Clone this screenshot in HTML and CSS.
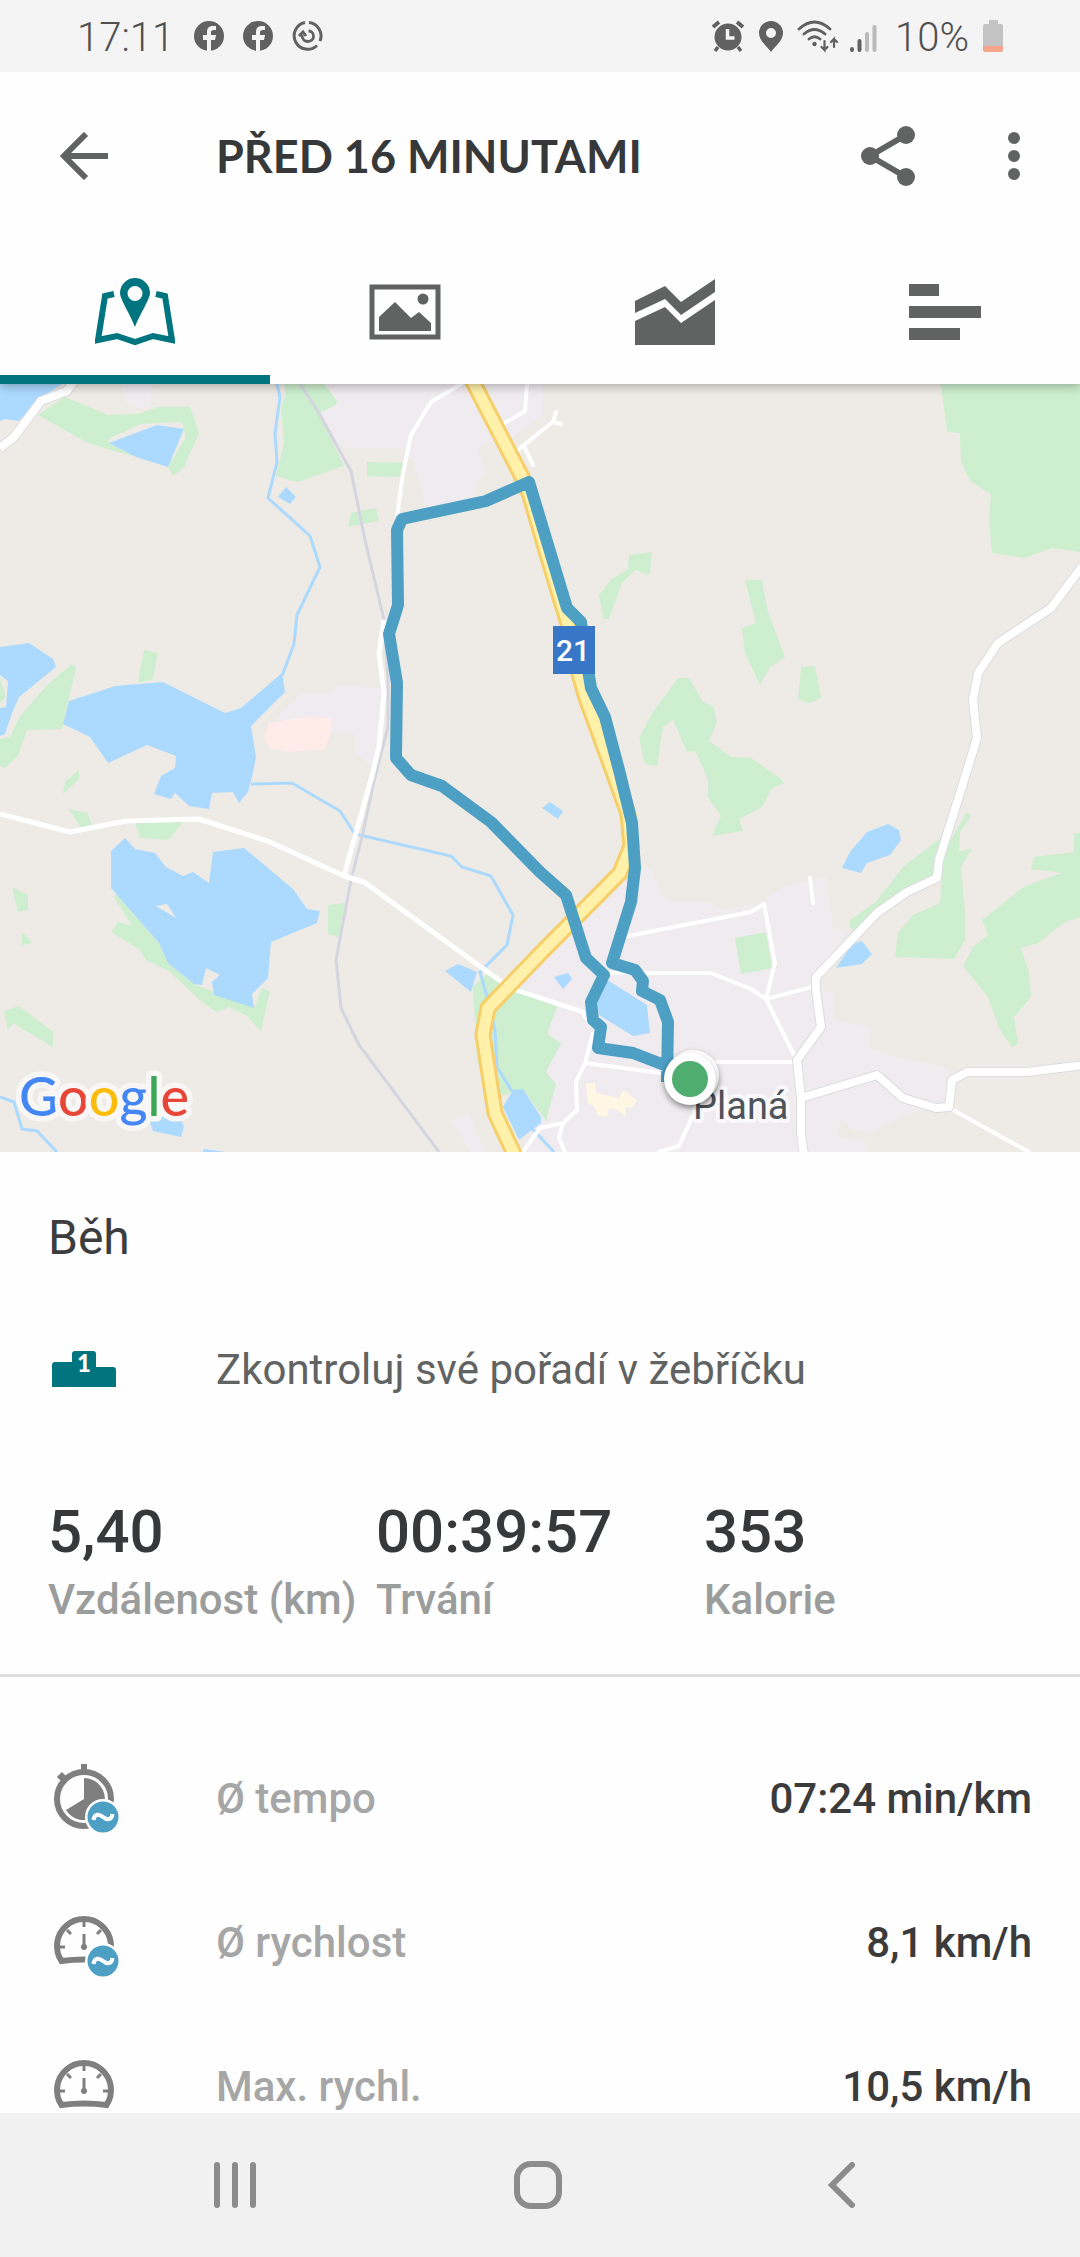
FILE: index.html
```html
<!DOCTYPE html>
<html lang="cs">
<head>
    <meta charset="UTF-8">
    <meta name="viewport" content="width=device-width, initial-scale=1.0">
    <title>Běh</title>
    <link rel="stylesheet" href="styles.css">
</head>
<body>

    <!-- Status bar -->
    <div class="status-bar">
        <div class="status-group">
            <span class="status-text">17:11</span>
            <svg class="status-fb" width="32" height="32" viewBox="0 0 32 32"><circle cx="16" cy="16" r="15" fill="#616161"/><path d="M14 32V20h-4v-5h4v-3c0-4 2-6 6-6h3v4h-2c-2 0-3 1-3 2v3h5l-1 5h-4v12z" fill="#f4f4f4"/></svg>
            <svg class="status-fb" width="32" height="32" viewBox="0 0 32 32"><circle cx="16" cy="16" r="15" fill="#616161"/><path d="M14 32V20h-4v-5h4v-3c0-4 2-6 6-6h3v4h-2c-2 0-3 1-3 2v3h5l-1 5h-4v12z" fill="#f4f4f4"/></svg>
            <svg width="32" height="32" viewBox="0 0 32 32" fill="none" stroke="#616161" stroke-width="3"><path d="M14 2.500A13.500 13.500 0 1 0 26 25.500M18 2.500A13.500 13.500 0 0 1 29 21"/><path d="M11 15c0 9 12 8 11.500 1 0-4-3-5-5-5M8 16l4-4 3 4" stroke-width="2.800"/></svg>
        </div>
        <div class="status-group">
            <svg width="34" height="34" viewBox="0 0 34 34" fill="none" stroke="#616161"><circle cx="17" cy="18" r="13.500" fill="#616161" stroke="none"/><path d="M2 8l6-5M32 8l-6-5" stroke-width="4"/><path d="M7 28l-3 4M27 28l3 4" stroke-width="3.500"/><path d="M16.500 10v9h7" stroke="#f4f4f4" stroke-width="3.500"/></svg>
            <svg width="24" height="34" viewBox="0 0 24 34"><path d="M12 2a12 12 0 0 0-12 12c0 8 8 13 12 19 4-6 12-11 12-19a12 12 0 0 0-12-12zm0 7a5 5 0 1 1 0 10 5 5 0 0 1 0-10z" fill="#616161"/></svg>
            <svg width="42" height="36" viewBox="0 0 42 36" fill="none" stroke="#616161" stroke-width="2.800" stroke-linecap="round"><path d="M2 11Q17.500-3 33 11M7 16Q17.500 7 28 16M12 21Q17.500 16.500 23 21"/><circle cx="17.500" cy="26" r="2.200" fill="#616161" stroke="none"/><path d="M27.500 23v9l-3-3m3 3l3-3M37 29v-8l-3 3m3-3l3 3" stroke-width="2.200"/></svg>
            <svg class="status-signal" width="28" height="34" viewBox="0 0 28 34" stroke-width="4" stroke-linecap="round"><path d="M3 30v1M10.500 22v9" stroke="#616161"/><path d="M18 15v16M25.500 8v23" stroke="#bababa"/></svg>
            <span class="status-text">10%</span>
            <svg width="20" height="34" viewBox="0 0 20 34"><path d="M6 1h9v4h3a2 2 0 0 1 2 2v20H0V7a2 2 0 0 1 2-2h4z" fill="#c3c3c3"/><path d="M0 27h20v4a2 2 0 0 1-2 2H2a2 2 0 0 1-2-2z" fill="#f6a58c"/></svg>
        </div>
    </div>

    <header class="header">
        <div class="app-bar">
            <button class="icon-btn" aria-label="Zpět">
                <svg width="48" height="48" viewBox="0 0 48 48" fill="none" stroke="#616362" stroke-width="6"><path d="M48 24H5M26 2L4 24l22 22"/></svg>
            </button>
            <h1 class="title">PŘED 16 MINUTAMI</h1>
            <button class="icon-btn share" aria-label="Sdílet">
                <svg width="54" height="60" viewBox="0 0 54 60"><path d="M45 9L9 30l36 21" fill="none" stroke="#616362" stroke-width="6"/><g fill="#616362"><circle cx="45" cy="9" r="9"/><circle cx="9" cy="30" r="9"/><circle cx="45" cy="51" r="9"/></g></svg>
            </button>
            <button class="icon-btn" aria-label="Více">
                <svg width="12" height="48" viewBox="0 0 12 48" fill="#616362"><circle cx="6" cy="6" r="6"/><circle cx="6" cy="24" r="6"/><circle cx="6" cy="42" r="6"/></svg>
            </button>
        </div>

        <nav class="tabs">
            <button class="tab active" aria-label="Mapa">
                <svg width="80" height="70" viewBox="0 0 80 70"><path d="M19 17l-9 2L3 63l19-4 18 6 18-6 19 4-7-44-9-2" fill="none" stroke="#00757f" stroke-width="6"/><path d="M40 1a15 15 0 0 0-15 15c0 6 10 21 15 34 5-13 15-28 15-34A15 15 0 0 0 40 1zm0 8a7.500 7.500 0 1 1 0 15 7.500 7.500 0 0 1 0-15z" fill="#00757f"/></svg>
            </button>
            <button class="tab" aria-label="Fotky">
                <svg width="72" height="56" viewBox="0 0 72 56"><rect x="3" y="3" width="66" height="50" fill="none" stroke="#616362" stroke-width="5"/><path d="M10 47V33l16-15 16 16 8-6 12 11v8z" fill="#616362"/><circle cx="54" cy="15" r="5.500" fill="#616362"/></svg>
            </button>
            <button class="tab" aria-label="Graf">
                <svg width="80" height="66" viewBox="0 0 80 66" fill="#616362"><path d="M0 22L30 7l16 16L80 0v13L46 36 30 20 0 34z"/><path d="M0 42l30-14 16 16 34-23v45H0z"/></svg>
            </button>
            <button class="tab" aria-label="Mezičasy">
                <svg width="72" height="56" viewBox="0 0 72 56" fill="#616362"><path d="M0 0h30v12H0zM0 22h72v12H0zM0 44h51v12H0z"/></svg>
            </button>
        </nav>
    </header>

    <main class="content">
        <!-- Map -->
        <svg class="map" viewBox="0 0 1080 768" role="img" aria-label="Mapa trasy">
            <rect width="1080" height="768" fill="#eeebe6"/>

            <!-- built-up areas -->
            <g fill="#efebef">
                <path d="M122 0H153L149 23 138 24 126 19z"/>
                <path d="M324 0H543V30L513 53 477 63 486 89 477 99 472 123 425 129 422 106 412 76 406 64H339L319 29 336 21z"/>
                <path d="M301 309H331L336 302 384 304 379 363 371 383 355 368 354 348 332 349 330 334 275 336z"/>
                <path d="M451 736L468 729 486 768H470z"/>
                <path d="M628 496L643 484 652 486 661 509 671 518 712 519 723 526 760 519 781 504 826 492 833 543 846 549 815 593 822 606 833 609 834 636 871 643 869 663 895 673 946 683 952 693 948 719 908 731 871 748 852 746 840 734 838 753 867 758V768H520L540 730 550 640 514 606 540 580z"/>
            </g>
            <path d="M269 339L306 333 331 334 332 346 325 365 288 368 270 364 264 354z" fill="#ffebe8"/>
            <path d="M586 699H595L596 709 619 714 623 706 637 716 632 724 626 723V733L617 726 609 724 607 733 597 731 595 723 588 719z" fill="#fff6e3"/>

            <!-- woods -->
            <g fill="#cdeecf">
                <path d="M38 31L65 13 108 31 138 30 158 23H190L199 49 184 83 173 92 168 83 186 53 182 38 141 40 108 55 109 59 138 73 114 67 86 58z"/>
                <path d="M284 0H324L337 17 336 21 319 29 344 82 297 98 276 92 284 59 281 23 286 9z"/>
                <path d="M367 78L404 79 402 93 367 92z"/>
                <path d="M351 129L376 124 379 137 348 143z"/>
                <path d="M0 294L6 313 0 319z"/>
                <path d="M72 280L76 283 62 345 27 346 18 372 5 384 0 382V355L10 353 19 334 46 302z"/>
                <path d="M144 266L158 269 153 295 138 299z"/>
                <path d="M79 386V395L63 410 65 398z"/>
                <path d="M69 425L87 429 93 443 81 444z"/>
                <path d="M135 439L183 438 168 456 140 454z"/>
                <path d="M116 510L159 559 168 579 194 600 254 624 262 604 270 607 261 647 247 632 229 623 217 628 203 619 169 587 146 576 140 566 111 548 118 538 132 542 114 513z"/>
                <path d="M12 503L28 511V526L18 528z"/>
                <path d="M22 548L33 559 22 561z"/>
                <path d="M4 627L19 622 53 648V663L13 639 8 646z"/>
                <path d="M328 521L345 519 339 553 328 550z"/>
                <path d="M487 590L540 612 557 623 547 650 561 659 546 688 556 700 546 737 523 705 503 711 495 729 477 676 473 603z"/>
                <path d="M941 0L947 48 960 49 961 78 970 97 991 110 989 136 992 169 1024 174 1052 164 1080 168V0z"/>
                <path d="M629 171L652 168 650 191 635 186 622 199 609 235H603L599 211 612 195 628 185z"/>
                <path d="M745 196H762L768 228 785 273 770 283 760 301 745 269 742 244 756 239z"/>
                <path d="M801 283L815 282 821 314 809 319 798 315z"/>
                <path d="M678 294H689L703 318 713 322 717 338 709 357 731 373 751 374 781 395 784 399 772 404 762 423 739 435 743 447 712 452 721 432 708 413V396L704 386 695 367 687 368 673 336 663 343 657 382 645 380 639 354 653 328z"/>
                <path d="M735 554L766 548 772 584 741 590z"/>
                <path d="M967 428L971 432 960 448 959 468 972 464 961 483 965 529V556L954 575 895 573 898 549 913 531 940 519 942 490 939 476z"/>
                <path d="M941 454L903 483 876 518 850 536V544L855 547 878 528 907 508 937 494z"/>
                <path d="M1080 449H1074V468L1034 473 1031 485 1062 489 1025 502 982 536 988 551 973 563 963 582 988 613 1000 646 1012 663 1018 660 1014 633 1031 613 1029 589 1021 564 1038 559 1065 538 1080 533z"/>
            </g>

            <!-- water -->
            <g fill="#acdaff">
                <path d="M0 0H62L38 16 19 37 5 35 0 37z"/>
                <path d="M109 59L157 41 184 45 168 83 136 73z"/>
                <path d="M286 103L296 113 290 120 278 113z"/>
                <path d="M0 263L29 259 53 275 56 283 19 313 12 329 5 350 0 352V324L6 323 8 297 0 291z"/>
                <path d="M69 317L115 302 163 298 225 329 241 324 282 289 285 308 251 342 256 373 253 389 248 408 239 419 233 408 212 409 209 425 189 422 175 409 171 415 154 410 161 392 175 384 176 372 147 361 108 379 90 353 63 340z"/>
                <path fill-rule="evenodd" d="M125 454L135 465 155 469 166 483 183 492 193 488 209 499 213 468 244 464 293 505 307 525 320 527 317 539 271 558 268 594 252 610 254 624 214 611 212 598 220 591 206 584 202 601 194 600 168 579 159 559 111 504V467zM156 522L167 520 176 534z"/>
                <path d="M458 580L477 588 471 608 445 587z"/>
                <path d="M513 706L523 705 541 733V739L519 756 503 723z"/>
                <path d="M148 733L179 731 184 743 181 753 153 747z"/>
                <path d="M204 765L226 768H203z"/>
                <path d="M888 440L899 446 901 456 890 471 867 479 861 489 842 484 850 468 867 448z"/>
                <path d="M852 560L862 557 872 570 862 580 836 584z"/>
                <path d="M550 418L563 427 558 435 542 424z"/>
                <path d="M554 593L568 589 572 595 563 605z"/>
                <path d="M604 594L647 621 650 649 633 652 599 631 597 619z"/>
            </g>
            <g fill="none" stroke="#acdaff" stroke-width="3">
                <path d="M277 0L280 13 275 49 277 78 268 114 310 152 320 183 297 231 294 260 282 292"/>
                <path d="M251 400L292 399 340 427 355 450 451 472 462 483 491 492 513 531 507 561 480 588 488 616 495 646 497 683 512 707M530 742L554 768"/>
                <path d="M0 713L14 718 22 745 37 747 57 768"/>
            </g>

            <!-- railway -->
            <path d="M300 0L319 29 343 73 351 87 365 156 384 236 388 296V343L375 393 362 453 351 496 336 576 341 624 359 661 439 768" fill="none" stroke="#d5d5df" stroke-width="3"/>

            <!-- local roads -->
            <g fill="none" stroke="#fff" stroke-width="4" stroke-linejoin="round" stroke-linecap="round">
                <path d="M461 0L431 18 411 51 403 89 397 133M527 0L525 27 503 40M518 66L540 48 553 38 556 28M553 38L561 40M525 64L533 81"/>
                <path d="M628 552L751 528 764 520 775 579 766 615 795 673M766 615L812 603M611 589H711L751 605 766 615M810 494L813 519M716 678H795"/>
                <path d="M593 649L585 679 661 689M585 679L576 698 577 726 563 739 559 754 565 768M563 739L540 744 523 768M692 733L679 762 659 768M953 726L1029 768"/>
            </g>
            <g fill="none" stroke="#fff" stroke-width="5" stroke-linejoin="round">
                <path d="M384 236L379 269 384 309 379 363 372 392 344 492"/>
                <path d="M0 430L70 448 126 437 199 435 270 458 344 492 364 498 510 604 583 628 592 642"/>
            </g>

            <!-- main roads, casing first -->
            <g fill="none" stroke-linejoin="round">
                <path d="M0 64L14 53 41 17 67 7 75-4M1084 180L1051 224 998 259 978 289 973 316 977 354 966 390 939 476 937 494 907 508 878 528 816 593V606L821 643 797 676 801 714V749L804 772M801 714L877 691 903 714 936 724 949 723 952 696 967 688H1027L1084 681" stroke="#dcdcdf" stroke-width="10"/>
                <path d="M0 64L14 53 41 17 67 7 75-4M1084 180L1051 224 998 259 978 289 973 316 977 354 966 390 939 476 937 494 907 508 878 528 816 593V606L821 643 797 676 801 714V749L804 772M801 714L877 691 903 714 936 724 949 723 952 696 967 688H1027L1084 681" stroke="#fff" stroke-width="8"/>
                <path d="M472-4L522 93 530 112 548 174 568 240 579 290 586 314 613 388 628 430 631 462 620 489 540 570 488 624 483 651 495 729 515 772" stroke="#f6cf6a" stroke-width="17"/>
                <path d="M472-4L522 93 530 112 548 174 568 240 579 290 586 314 613 388 628 430 631 462 620 489 540 570 488 624 483 651 495 729 515 772" stroke="#fff1aa" stroke-width="11"/>
            </g>

            <!-- recorded track -->
            <path d="M667 698L668 638 660 616 642 607 643 597 635 586 612 579 631 518 635 484 632 439 619 386 605 333 591 304 588 286 581 238 567 224 529 98 486 117 402 135 397 146 398 221 389 250 397 299 396 374 411 391 442 402 491 438 540 488 566 511 586 574 604 591 591 618 593 636 601 643 598 664 633 669 672 684" fill="none" stroke="#4d9fc4" stroke-width="12" stroke-linejoin="round"/>

            <rect x="553" y="242" width="42" height="48" fill="#3876c8"/>
            <text class="road-number" x="573" y="277" text-anchor="middle">21</text>

            <text class="place" x="693" y="735">Planá</text>
            <circle class="pin" cx="693" cy="692" r="26"/>
            <circle class="pin" cx="690" cy="695" r="26"/>
            <circle cx="690" cy="695" r="18" fill="#50ad70"/>

            <text class="google" x="19" y="732"><tspan fill="#4486f4">G</tspan><tspan fill="#e64537">o</tspan><tspan fill="#fbbd0a">o</tspan><tspan fill="#4486f4">g</tspan><tspan fill="#3aa757">l</tspan><tspan fill="#e64537">e</tspan></text>
        </svg>

        <h2 class="sport">Běh</h2>

        <a class="leaderboard" href="#">
            <svg width="72" height="48" viewBox="0 -6 72 48"><path d="M4 36V14a3 3 0 0 1 3-3h17V3a3 3 0 0 1 3-3h18a3 3 0 0 1 3 3v13h17a3 3 0 0 1 3 3v17z" fill="#00757f"/><text class="rank" x="36" y="21" text-anchor="middle">1</text></svg>
            <span>Zkontroluj své pořadí v žebříčku</span>
        </a>

        <!-- Summary -->
        <dl class="summary">
            <div><dd>5,40</dd><dt>Vzdálenost (km)</dt></div>
            <div><dd>00:39:57</dd><dt>Trvání</dt></div>
            <div><dd>353</dd><dt>Kalorie</dt></div>
        </dl>

        <!-- Details -->
        <dl class="details">
            <div class="detail">
                <svg width="72" height="72" viewBox="0 0 72 72"><g fill="none" stroke="#7f7f7f" stroke-width="6"><circle cx="36" cy="37" r="27"/><path d="M36 2v8M11 17l5-5"/></g><path d="M36 37V16a21 21 0 1 1-18 32z" fill="#7f7f7f"/><circle cx="55" cy="55" r="18" fill="#fff"/><circle cx="55" cy="55" r="15.500" fill="#4d9fc4"/><path d="M45.500 58c1-7 6-6 9.500-3s8.500 4 9.500-3" fill="none" stroke="#fff" stroke-width="4"/></svg>
                <dt>Ø tempo</dt>
                <dd>07:24 min/km</dd>
            </div>
            <div class="detail">
                <svg width="72" height="72" viewBox="0 0 72 72"><path d="M13.500 55a27 27 0 1 1 45 0q-22.500-3-45 0z" fill="none" stroke="#7f7f7f" stroke-width="6"/><path d="M36 16v5M12 41h5M60 41h-5M19 24l4 4M53 24l-4 4M36 28v13" stroke="#7f7f7f" stroke-width="3"/><circle cx="36" cy="41" r="3" fill="#7f7f7f"/><circle cx="55" cy="55" r="18" fill="#fff"/><circle cx="55" cy="55" r="15.500" fill="#4d9fc4"/><path d="M45.500 58c1-7 6-6 9.500-3s8.500 4 9.500-3" fill="none" stroke="#fff" stroke-width="4"/></svg>
                <dt>Ø rychlost</dt>
                <dd>8,1 km/h</dd>
            </div>
            <div class="detail">
                <svg width="72" height="72" viewBox="0 0 72 72"><path d="M13.500 55a27 27 0 1 1 45 0q-22.500-3-45 0z" fill="none" stroke="#7f7f7f" stroke-width="6"/><path d="M36 16v5M12 41h5M60 41h-5M19 24l4 4M53 24l-4 4M36 28v13" stroke="#7f7f7f" stroke-width="3"/><circle cx="36" cy="41" r="3" fill="#7f7f7f"/></svg>
                <dt>Max. rychl.</dt>
                <dd>10,5 km/h</dd>
            </div>
        </dl>
    </main>

    <!-- System navigation -->
    <nav class="system-nav">
        <button aria-label="Poslední aplikace"><svg width="42" height="46" viewBox="0 0 42 46"><path d="M3 3v40M21 3v40M39 3v40" stroke="#8c8c8c" stroke-width="6" stroke-linecap="round"/></svg></button>
        <button aria-label="Domů"><svg width="48" height="48" viewBox="0 0 48 48"><rect x="3" y="3" width="42" height="42" rx="14" fill="none" stroke="#8c8c8c" stroke-width="6"/></svg></button>
        <button aria-label="Zpět"><svg width="28" height="46" viewBox="0 0 28 46"><path d="M25 3L5 23l20 20" fill="none" stroke="#8c8c8c" stroke-width="6" stroke-linecap="round"/></svg></button>
    </nav>

</body>
</html>
```

FILE: styles.css
```css
* {
    margin: 0;
    padding: 0;
    box-sizing: border-box;
}

body {
    font-family: Roboto, "Liberation Sans", sans-serif;
    background-color: #fefefe;
    color: #373839;
    display: flex;
    flex-direction: column;
    height: 100vh;
    overflow: hidden;
}

button {
    background: none;
    border: none;
    cursor: pointer;
}

svg {
    display: block;
    flex-shrink: 0;
}

/* Status bar */
.status-bar {
    position: relative;
    z-index: 2;
    display: flex;
    justify-content: space-between;
    align-items: center;
    flex-shrink: 0;
    height: 72px;
    padding: 0 77px;
    background-color: #f4f4f4;
}

.status-group {
    display: flex;
    align-items: center;
    gap: 14px;
}

.status-text {
    padding-top: 4px;
    font-size: 40px;
    font-weight: 300;
    line-height: 48px;
    color: #505050;
}

.status-fb {
    margin-right: 3px;
}

.status-group .status-text:first-child {
    margin-right: 5px;
}

.status-signal {
    margin-left: -4px;
    margin-right: 4px;
}

/* Header */
.header {
    position: relative;
    z-index: 1;
    flex-shrink: 0;
    background-color: #fefefe;
    box-shadow: 0 2px 10px rgba(0, 0, 0, 0.3);
}

.app-bar {
    display: flex;
    align-items: center;
    height: 168px;
    padding: 0 60px;
}

.title {
    flex: 1;
    padding-left: 108px;
    font-family: Lato, sans-serif;
    font-size: 45px;
    font-weight: 700;
}

.share {
    margin-right: 93px;
}

.tabs {
    display: flex;
    height: 144px;
}

.tab {
    flex: 1;
    display: flex;
    justify-content: center;
    align-items: center;
    border-top: 9px solid transparent;
    border-bottom: 9px solid transparent;
}

.tab.active {
    border-bottom-color: #00757f;
}

/* Content */
.content {
    flex: 1;
    min-height: 0;
    overflow: hidden;
}

.map {
    width: 100%;
    height: auto;
}

.road-number {
    font-size: 30px;
    font-weight: 500;
    fill: #fff;
}

.place {
    font-size: 38px;
    fill: #4e545a;
    stroke: rgba(255, 255, 255, 0.7);
    stroke-width: 8px;
    stroke-linejoin: round;
    paint-order: stroke;
}

.pin {
    fill: #fff;
    filter: drop-shadow(0 3px 3px rgba(0, 0, 0, 0.35));
}

.google {
    font-family: Lato, sans-serif;
    font-size: 54px;
    font-weight: 500;
    stroke: #f8f7f5;
    stroke-width: 11px;
    stroke-linejoin: round;
    paint-order: stroke;
}

.sport {
    padding: 58px 48px 30px;
    font-size: 48px;
    font-weight: 400;
    line-height: 56px;
    color: #3c3d3e;
}

.leaderboard {
    display: flex;
    align-items: center;
    gap: 96px;
    height: 144px;
    padding: 2px 48px 0;
    font-size: 42px;
    color: #616362;
    text-decoration: none;
}

.rank {
    font-family: Lato, sans-serif;
    font-size: 24px;
    font-weight: 900;
    fill: #fff;
}

.summary {
    display: grid;
    grid-template-columns: repeat(3, 1fr);
    padding: 56px 48px 46px;
    border-bottom: 3px solid #dedede;
    font-weight: 500;
}

.summary div {
    display: flex;
    flex-direction: column;
    gap: 4px;
}

.summary dd {
    font-size: 60px;
    line-height: 72px;
}

.summary dt {
    font-size: 42px;
    line-height: 56px;
    color: #9b9d9c;
    white-space: nowrap;
}

.details {
    padding: 49px 48px 0;
    font-size: 42px;
    font-weight: 500;
}

.detail {
    display: flex;
    align-items: center;
    height: 144px;
}

.detail dt {
    flex: 1;
    padding-left: 96px;
    color: #a6a6a6;
}

.detail dd {
    color: #3b3b3b;
}

/* System navigation */
.system-nav {
    display: flex;
    flex-shrink: 0;
    height: 144px;
    padding: 0 88px 0 84px;
    background-color: #f1f1f1;
}

.system-nav button {
    flex: 1;
    display: flex;
    justify-content: center;
    align-items: center;
}
```
